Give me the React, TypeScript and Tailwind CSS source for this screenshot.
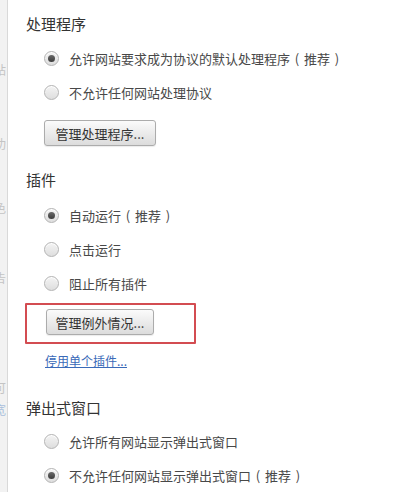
import React from "react";

const font = { fontFamily: '"Noto Sans CJK SC", "Noto Sans", sans-serif' };

// full-width brackets, as the Windows CJK font draws them
const P = ({ c }: { c: string }) => (
  <span className="inline-block w-[14px] text-center">{c}</span>
);

const Label = ({ text }: { text: string }) => {
  const parts = text.split(/([（）])/);
  return (
    <>
      {parts.map((p, i) =>
        p === "（" || p === "）" ? <P key={i} c={p === "（" ? "(" : ")"} /> : <span key={i}>{p}</span>
      )}
    </>
  );
};

const Radio = ({ checked }: { checked?: boolean }) => (
  <span className="flex h-[15px] w-[15px] shrink-0 items-center justify-center rounded-full border border-[#b4b4b4] bg-gradient-to-b from-[#f4f4f4] to-[#dedede] shadow-[inset_0_1px_0_#fff]">
    {checked && (
      <span className="h-[7px] w-[7px] rounded-full bg-gradient-to-b from-[#6a6a6a] to-[#3c3c3c]" />
    )}
  </span>
);

const RadioRow = ({ label, checked }: { label: string; checked?: boolean }) => (
  <div className="flex h-[34px] items-center gap-[10px] pl-[19px]">
    <Radio checked={checked} />
    <span className="flex items-center text-[13px] leading-none text-[#484848]">
      <Label text={label} />
    </span>
  </div>
);

const Btn = ({ label, w }: { label: string; w: string }) => (
  <button
    className={`flex h-[26px] items-center justify-center rounded-[3px] border border-[#acacac] bg-gradient-to-b from-[#fbfbfb] to-[#dcdcdc] text-[13px] leading-none text-[#333] shadow-[0_1px_1px_rgba(0,0,0,0.08)] ${w}`}
    style={font}
  >
    {label}
  </button>
);

const Heading = ({ children }: { children: React.ReactNode }) => (
  <h2 className="h-[20px] pl-[1px] text-[15px] leading-[20px] text-[#333]">{children}</h2>
);

export default function App() {
  return (
    <div className="flex h-[492px] w-[400px] overflow-hidden bg-white" style={font}>
      <div className="flex w-[8px] shrink-0 flex-col overflow-hidden border-r border-[#d9d9d9] bg-[#f2f2f2] text-[12px] leading-none text-[#c4c4c4]">
        <span className="mt-[64px] -ml-[6px]">站</span>
        <span className="mt-[62px] -ml-[6px]">功</span>
        <span className="mt-[52px] -ml-[6px]">色</span>
        <span className="mt-[58px] -ml-[6px]">告</span>
        <span className="mt-[98px] -ml-[6px]">可</span>
        <span className="mt-[10px] -ml-[6px] text-[#a9bfdc]">宽</span>
      </div>

      <div className="flex flex-1 flex-col pl-[17px] pt-[14px]">
        <Heading>处理程序</Heading>
        <div className="mt-[7px]">
          <RadioRow checked label="允许网站要求成为协议的默认处理程序（推荐）" />
          <RadioRow label="不允许任何网站处理协议" />
        </div>
        <div className="mt-[11px] pl-[19px]">
          <Btn label="管理处理程序..." w="w-[112px]" />
        </div>

        <div className="mt-[24px]">
          <Heading>插件</Heading>
        </div>
        <div className="mt-[8px]">
          <RadioRow checked label="自动运行（推荐）" />
          <RadioRow label="点击运行" />
          <RadioRow label="阻止所有插件" />
        </div>
        <div className="mt-[3px] h-[42px] w-[171px] rounded-[1px] border-2 border-red-700/70 pl-[19px] pt-[4px]">
          <Btn label="管理例外情况..." w="w-[108px]" />
        </div>
        <a
          href="#"
          className="mt-[8px] ml-[20px] w-fit text-[12px] leading-[18px] text-[#3a6ab8] underline"
        >
          停用单个插件...
        </a>

        <div className="mt-[28px]">
          <Heading>弹出式窗口</Heading>
        </div>
        <div className="mt-[6px]">
          <RadioRow label="允许所有网站显示弹出式窗口" />
          <RadioRow checked label="不允许任何网站显示弹出式窗口（推荐）" />
        </div>
      </div>
    </div>
  );
}
